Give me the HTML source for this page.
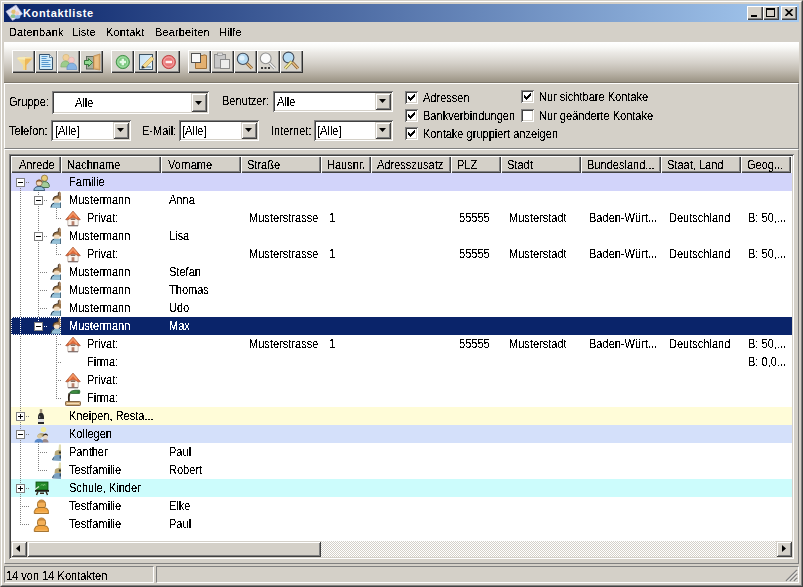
<!DOCTYPE html>
<html><head><meta charset="utf-8"><title>Kontaktliste</title>
<style>
*{box-sizing:border-box}
html,body{margin:0;padding:0}
body{width:803px;height:587px;overflow:hidden;background:#d4d0c8;position:relative;font-family:"Liberation Sans", sans-serif;font-size:11px;color:#000}
.a{position:absolute}
.t{position:absolute;white-space:nowrap;line-height:13px;font-size:12px;transform:translateY(1px) scaleX(0.92);transform-origin:0 0}
.r{position:absolute;background:#d4d0c8;box-shadow:inset 1px 1px #d4d0c8,inset -1px -1px #404040,inset 2px 2px #fff,inset -2px -2px #808080}
.hd{position:absolute;background:#d4d0c8;box-shadow:inset 1px 1px #fff,inset -1px -1px #404040,inset -2px -2px #808080}
.sk{position:absolute;background:#fff;box-shadow:inset 1px 1px #808080,inset -1px -1px #fff,inset 2px 2px #404040,inset -2px -2px #d4d0c8}
.tb{position:absolute;width:23px;height:23px;background:#d8d5ce;box-shadow:inset 1px 1px #fff,inset -1px -1px #303030,inset -2px -2px #8a8a8a}
.tb svg{position:absolute;left:0;top:0}
.cb{position:absolute;width:13px;height:13px;background:#fff;box-shadow:inset 1px 1px #808080,inset -1px -1px #fff,inset 2px 2px #404040,inset -2px -2px #d4d0c8}
.cb svg{position:absolute;left:3px;top:3px}
</style></head><body>
<svg width="0" height="0" style="position:absolute"><filter id="th" x="0" y="0" width="100%" height="100%" color-interpolation-filters="sRGB"><feComponentTransfer><feFuncA type="discrete" tableValues="0 0 0 0 1 1 1 1 1"/></feComponentTransfer></filter></svg>
<div class="a" style="left:0;top:0;width:803px;height:587px;border-top:1px solid #d4d0c8;border-left:1px solid #d4d0c8;border-right:1px solid #404040;border-bottom:1px solid #404040"></div><div class="a" style="left:1px;top:1px;width:801px;height:585px;border-top:1px solid #fff;border-left:1px solid #fff;border-right:1px solid #808080;border-bottom:1px solid #808080"></div><div class="a" style="left:4px;top:4px;width:795px;height:18px;background:linear-gradient(to right,#0a246a,#a6caf0)"></div><svg class="a" style="left:5px;top:4px" width="18" height="18" viewBox="0 0 18 18">
<path d="M1 7.5 L11 1 L17.5 10 L7.5 16.5 Z" fill="#e6e6f6" stroke="#a8acd0" stroke-width="0.8"/>
<path d="M2.5 7.6 L8.5 8.5 L11 2.5" fill="none" stroke="#c4c6e4" stroke-width="0.8"/>
<circle cx="8.5" cy="7.8" r="2.2" fill="#e2c070"/>
<circle cx="12.2" cy="9.2" r="2" fill="#f2cbc0"/>
<ellipse cx="8.2" cy="12.2" rx="2.6" ry="1.9" fill="#8cc48c"/>
<ellipse cx="12.6" cy="12.8" rx="2.8" ry="1.9" fill="#8cb8ec"/>
</svg><div class="a" style="left:23px;top:7px;color:#fff;font-weight:bold;letter-spacing:0.65px;font-size:11px;line-height:13px;white-space:nowrap">Kontaktliste</div><div class="r" style="left:747px;top:6px;width:16px;height:14px;box-shadow:inset 1px 1px #fff,inset -1px -1px #404040,inset -2px -2px #808080"></div><div class="r" style="left:763px;top:6px;width:16px;height:14px;box-shadow:inset 1px 1px #fff,inset -1px -1px #404040,inset -2px -2px #808080"></div><div class="r" style="left:781px;top:6px;width:16px;height:14px;box-shadow:inset 1px 1px #fff,inset -1px -1px #404040,inset -2px -2px #808080"></div><div class="a" style="left:751px;top:15px;width:6px;height:2px;background:#000"></div><div class="a" style="left:766px;top:8px;width:9px;height:9px;border:1px solid #000;border-top-width:2px"></div><svg class="a" style="left:785px;top:9px" width="8" height="7" viewBox="0 0 8 7"><path d="M0.5 0 L7.5 7 M7.5 0 L0.5 7" stroke="#000" stroke-width="1.6"/></svg><div class="a" style="left:4px;top:42px;width:795px;height:41px;background:linear-gradient(to bottom,#ffffff 0%,#fafaf8 10%,#ebe9e5 25%,#d6d2cb 50%,#c2bcb2 70%,#a8a193 90%,#9a9386 100%);border-top:1px solid #fff;border-bottom:1px solid #7c766a"></div><div class="tb" style="left:12px;top:50px"><svg width="23" height="23" viewBox="0 0 23 23"><defs><linearGradient id="gf" x1="0" x2="1"><stop offset="0" stop-color="#fbe8a0"/><stop offset="0.5" stop-color="#f8d880"/><stop offset="0.55" stop-color="#f0b040"/><stop offset="1" stop-color="#f6c460"/></linearGradient></defs><g opacity="0.85"><path d="M5 8.5 Q5 6.8 12.5 6.8 Q20.5 6.8 20.5 8.5 L14.5 15 L14.5 20 L11 20 L11 15 Z" fill="url(#gf)"/><ellipse cx="12.7" cy="8.3" rx="7" ry="1.4" fill="#fcefb8"/><path d="M13 8.5 L19.5 8.5 L14.2 14.5 Z" fill="#f0b448"/></g></svg></div><div class="tb" style="left:35px;top:50px"><svg width="23" height="23" viewBox="0 0 23 23"><path d="M4.5 4.5 L14.5 4.5 L17.5 7.5 L17.5 19.5 L4.5 19.5 Z" fill="#d2ecfa" stroke="#34506a" stroke-width="1"/><path d="M14.5 4.5 L14.5 7.5 L17.5 7.5" fill="#eef8ff" stroke="#34506a" stroke-width="0.7"/><path d="M6.5 6.5h6M6.5 8.5h5M6.5 10.5h9M6.5 12.5h7M6.5 14.5h9M6.5 16.5h9" stroke="#4a8ec8" stroke-width="0.9"/></svg></div><div class="tb" style="left:57px;top:50px"><svg width="23" height="23" viewBox="0 0 23 23"><circle cx="9" cy="7.5" r="3.2" fill="#f2cf98" stroke="#c8b070" stroke-width="0.5"/><path d="M3.8 17 Q3.8 11 8.5 11 Q12.5 11 12.5 15 L12 17 Z" fill="#9ccc8c" stroke="#78a868" stroke-width="0.6"/><circle cx="14.5" cy="10" r="2.9" fill="#f6c8c4" stroke="#d8a8a8" stroke-width="0.5"/><path d="M9.8 19.5 Q9.8 13.2 14.8 13.2 Q19.8 13.2 19.8 19.5 Z" fill="#88b4e4" stroke="#5a88c0" stroke-width="0.6"/></svg></div><div class="tb" style="left:80px;top:50px"><svg width="23" height="23" viewBox="0 0 23 23"><rect x="6.5" y="6.5" width="7" height="12.5" fill="#a8b0a0" stroke="#5a6258" stroke-width="0.9"/><path d="M4.5 10.5 L8.5 10.5 L8.5 8.5 L12.5 12.5 L8.5 16.5 L8.5 14.5 L4.5 14.5 Z" fill="#90d890" stroke="#2a7030" stroke-width="0.9"/><path d="M13.5 6 L20 4 L20 20 L13.5 19 Z" fill="#e0b070" stroke="#b08048" stroke-width="0.7"/><path d="M15 7 L18.5 6 L18.5 18 L15 17.5Z" fill="#f0c890" opacity="0.7"/></svg></div><div class="tb" style="left:111px;top:50px"><svg width="23" height="23" viewBox="0 0 23 23"><circle cx="11.8" cy="12" r="6.6" fill="#7cc880" stroke="#3a8a40" stroke-width="0.9"/><circle cx="11.8" cy="12" r="5" fill="none" stroke="#b4e4b4" stroke-width="0.8"/><path d="M11.8 8.8v6.4M8.6 12h6.4" stroke="#e6fae6" stroke-width="2.4"/></svg></div><div class="tb" style="left:134px;top:50px"><svg width="23" height="23" viewBox="0 0 23 23"><defs><linearGradient id="ge" x1="0" y1="0" x2="1" y2="1"><stop offset="0" stop-color="#c4e0f4"/><stop offset="1" stop-color="#eaf6fc"/></linearGradient></defs><rect x="5.5" y="4.5" width="13" height="15" fill="url(#ge)" stroke="#3a5060" stroke-width="1"/><path d="M7 17h10" stroke="#6890a8" stroke-width="1.2"/><path d="M8.5 15.5 L17.5 6.5 L20 9 L11 18 Z" fill="#f4dc90" stroke="#c0a060" stroke-width="0.7"/><path d="M8.5 15.5 L11 18 L7.5 18.8 Z" fill="#303030"/></svg></div><div class="tb" style="left:157px;top:50px"><svg width="23" height="23" viewBox="0 0 23 23"><circle cx="11.8" cy="12" r="6.6" fill="#e87878" stroke="#b83838" stroke-width="0.9"/><circle cx="11.8" cy="12" r="5" fill="none" stroke="#f8b0b0" stroke-width="0.8"/><path d="M8.6 12h6.4" stroke="#fff0f0" stroke-width="2.4"/></svg></div><div class="tb" style="left:188px;top:50px"><svg width="23" height="23" viewBox="0 0 23 23"><path d="M7.5 5.5 L15 5.5 L16 4.8 L18.5 5.5 L18.5 18.5 L7.5 18.5 Z" fill="#e4b070" stroke="#a07038" stroke-width="1"/><rect x="3.5" y="3.5" width="9" height="9" fill="#f8f8f8" stroke="#505050" stroke-width="1"/></svg></div><div class="tb" style="left:211px;top:50px"><svg width="23" height="23" viewBox="0 0 23 23"><rect x="3.5" y="4.5" width="11" height="13.5" fill="#c8c8c8" stroke="#8a8a8a" stroke-width="1"/><rect x="6.5" y="3" width="5" height="2.5" fill="#e0e0e0" stroke="#909090" stroke-width="0.7"/><rect x="9.5" y="9.5" width="9" height="9" fill="#ececec" stroke="#8a8a8a" stroke-width="1"/></svg></div><div class="tb" style="left:234px;top:50px"><svg width="23" height="23" viewBox="0 0 23 23"><path d="M13 13.5 L18 18.5" stroke="#8a6030" stroke-width="3"/><path d="M13 13.5 L18 18.5" stroke="#e8c088" stroke-width="1.3"/><circle cx="8.9" cy="8.9" r="5.6" fill="#b8dcf4" stroke="#404a58" stroke-width="1.1"/><circle cx="8" cy="8" r="2.6" fill="#e2f2fc"/></svg></div><div class="tb" style="left:257px;top:50px"><svg width="23" height="23" viewBox="0 0 23 23"><path d="M12.5 13 L17.8 18.5" stroke="#909090" stroke-width="3"/><path d="M12.5 13 L17.8 18.5" stroke="#f8f8f8" stroke-width="1.3"/><circle cx="8.7" cy="8.4" r="5.4" fill="#fafafa" stroke="#909090" stroke-width="1.1"/><path d="M4 18h2M7.5 18h2M11 18h2" stroke="#383838" stroke-width="2"/></svg></div><div class="tb" style="left:280px;top:50px"><svg width="23" height="23" viewBox="0 0 23 23"><path d="M12 12 L18 18.5" stroke="#8a6030" stroke-width="3"/><path d="M12 12 L18 18.5" stroke="#e8c088" stroke-width="1.3"/><circle cx="8.5" cy="7.5" r="5.4" fill="#b8dcf4" stroke="#404a58" stroke-width="1.1"/><path d="M5 18.5 L11.5 11.5" stroke="#908040" stroke-width="3"/><path d="M5 18.5 L11.5 11.5" stroke="#f8f0a0" stroke-width="1.6"/></svg></div><div class="a" style="left:4px;top:83px;width:795px;height:66px;border-top:1px solid #fff;border-left:1px solid #fff;border-right:1px solid #808080;border-bottom:1px solid #808080"></div><div class="sk" style="left:52px;top:91px;width:157px;height:23px"></div><div class="hd" style="left:191px;top:93px;width:16px;height:19px;box-shadow:inset 1px 1px #d4d0c8,inset -1px -1px #404040,inset 2px 2px #fff,inset -2px -2px #808080"></div><svg class="a" style="left:195px;top:101px" width="7" height="4" viewBox="0 0 7 4"><path d="M0 0H7L3.5 4Z" fill="#000"/></svg><div class="sk" style="left:273px;top:91px;width:120px;height:21px"></div><div class="hd" style="left:375px;top:93px;width:16px;height:17px;box-shadow:inset 1px 1px #d4d0c8,inset -1px -1px #404040,inset 2px 2px #fff,inset -2px -2px #808080"></div><svg class="a" style="left:379px;top:99px" width="7" height="4" viewBox="0 0 7 4"><path d="M0 0H7L3.5 4Z" fill="#000"/></svg><div class="sk" style="left:51px;top:120px;width:80px;height:21px"></div><div class="hd" style="left:113px;top:122px;width:16px;height:17px;box-shadow:inset 1px 1px #d4d0c8,inset -1px -1px #404040,inset 2px 2px #fff,inset -2px -2px #808080"></div><svg class="a" style="left:117px;top:128px" width="7" height="4" viewBox="0 0 7 4"><path d="M0 0H7L3.5 4Z" fill="#000"/></svg><div class="sk" style="left:179px;top:120px;width:80px;height:21px"></div><div class="hd" style="left:241px;top:122px;width:16px;height:17px;box-shadow:inset 1px 1px #d4d0c8,inset -1px -1px #404040,inset 2px 2px #fff,inset -2px -2px #808080"></div><svg class="a" style="left:245px;top:128px" width="7" height="4" viewBox="0 0 7 4"><path d="M0 0H7L3.5 4Z" fill="#000"/></svg><div class="sk" style="left:314px;top:120px;width:79px;height:21px"></div><div class="hd" style="left:375px;top:122px;width:16px;height:17px;box-shadow:inset 1px 1px #d4d0c8,inset -1px -1px #404040,inset 2px 2px #fff,inset -2px -2px #808080"></div><svg class="a" style="left:379px;top:128px" width="7" height="4" viewBox="0 0 7 4"><path d="M0 0H7L3.5 4Z" fill="#000"/></svg><div class="cb" style="left:405px;top:91px"><svg width="7" height="7" viewBox="0 0 7 7" shape-rendering="crispEdges"><path d="M6 0h1v3h-1zM5 1h1v3h-1zM4 2h1v3h-1zM3 3h1v3h-1zM2 4h1v3h-1zM1 3h1v3h-1zM0 2h1v3h-1z" fill="#000"/></svg></div><div class="cb" style="left:405px;top:109px"><svg width="7" height="7" viewBox="0 0 7 7" shape-rendering="crispEdges"><path d="M6 0h1v3h-1zM5 1h1v3h-1zM4 2h1v3h-1zM3 3h1v3h-1zM2 4h1v3h-1zM1 3h1v3h-1zM0 2h1v3h-1z" fill="#000"/></svg></div><div class="cb" style="left:405px;top:127px"><svg width="7" height="7" viewBox="0 0 7 7" shape-rendering="crispEdges"><path d="M6 0h1v3h-1zM5 1h1v3h-1zM4 2h1v3h-1zM3 3h1v3h-1zM2 4h1v3h-1zM1 3h1v3h-1zM0 2h1v3h-1z" fill="#000"/></svg></div><div class="cb" style="left:521px;top:90px"><svg width="7" height="7" viewBox="0 0 7 7" shape-rendering="crispEdges"><path d="M6 0h1v3h-1zM5 1h1v3h-1zM4 2h1v3h-1zM3 3h1v3h-1zM2 4h1v3h-1zM1 3h1v3h-1zM0 2h1v3h-1z" fill="#000"/></svg></div><div class="cb" style="left:521px;top:109px"></div><div class="a" style="left:4px;top:149px;width:795px;height:415px;border-top:1px solid #fff;border-left:1px solid #fff;border-right:1px solid #808080;border-bottom:1px solid #808080"></div><div class="sk" style="left:9px;top:154px;width:785px;height:405px"></div><div class="hd" style="left:11px;top:156px;width:50px;height:17px"></div><div class="hd" style="left:61px;top:156px;width:100px;height:17px"></div><div class="hd" style="left:161px;top:156px;width:80px;height:17px"></div><div class="hd" style="left:241px;top:156px;width:80px;height:17px"></div><div class="hd" style="left:321px;top:156px;width:50px;height:17px"></div><div class="hd" style="left:371px;top:156px;width:80px;height:17px"></div><div class="hd" style="left:451px;top:156px;width:50px;height:17px"></div><div class="hd" style="left:501px;top:156px;width:80px;height:17px"></div><div class="hd" style="left:581px;top:156px;width:80px;height:17px"></div><div class="hd" style="left:661px;top:156px;width:80px;height:17px"></div><div class="hd" style="left:741px;top:156px;width:50px;height:17px"></div><div class="a" style="left:11px;top:173px;width:781px;height:18px;background:#d2d4fa"></div><div class="a" style="left:11px;top:317px;width:781px;height:18px;background:#0a246a"></div><div class="a" style="left:11px;top:407px;width:781px;height:18px;background:#fffcd8"></div><div class="a" style="left:11px;top:425px;width:781px;height:18px;background:#d4e0fa"></div><div class="a" style="left:11px;top:479px;width:781px;height:18px;background:#ccfcfc"></div><svg class="a" style="left:0;top:0" width="803" height="587" viewBox="0 0 803 587"><rect x="20" y="182" width="1" height="1" fill="#808080"/><rect x="20" y="184" width="1" height="1" fill="#808080"/><rect x="20" y="186" width="1" height="1" fill="#808080"/><rect x="20" y="188" width="1" height="1" fill="#808080"/><rect x="20" y="190" width="1" height="1" fill="#808080"/><rect x="20" y="192" width="1" height="1" fill="#808080"/><rect x="20" y="194" width="1" height="1" fill="#808080"/><rect x="20" y="196" width="1" height="1" fill="#808080"/><rect x="20" y="198" width="1" height="1" fill="#808080"/><rect x="20" y="200" width="1" height="1" fill="#808080"/><rect x="20" y="202" width="1" height="1" fill="#808080"/><rect x="20" y="204" width="1" height="1" fill="#808080"/><rect x="20" y="206" width="1" height="1" fill="#808080"/><rect x="20" y="208" width="1" height="1" fill="#808080"/><rect x="20" y="210" width="1" height="1" fill="#808080"/><rect x="20" y="212" width="1" height="1" fill="#808080"/><rect x="20" y="214" width="1" height="1" fill="#808080"/><rect x="20" y="216" width="1" height="1" fill="#808080"/><rect x="20" y="218" width="1" height="1" fill="#808080"/><rect x="20" y="220" width="1" height="1" fill="#808080"/><rect x="20" y="222" width="1" height="1" fill="#808080"/><rect x="20" y="224" width="1" height="1" fill="#808080"/><rect x="20" y="226" width="1" height="1" fill="#808080"/><rect x="20" y="228" width="1" height="1" fill="#808080"/><rect x="20" y="230" width="1" height="1" fill="#808080"/><rect x="20" y="232" width="1" height="1" fill="#808080"/><rect x="20" y="234" width="1" height="1" fill="#808080"/><rect x="20" y="236" width="1" height="1" fill="#808080"/><rect x="20" y="238" width="1" height="1" fill="#808080"/><rect x="20" y="240" width="1" height="1" fill="#808080"/><rect x="20" y="242" width="1" height="1" fill="#808080"/><rect x="20" y="244" width="1" height="1" fill="#808080"/><rect x="20" y="246" width="1" height="1" fill="#808080"/><rect x="20" y="248" width="1" height="1" fill="#808080"/><rect x="20" y="250" width="1" height="1" fill="#808080"/><rect x="20" y="252" width="1" height="1" fill="#808080"/><rect x="20" y="254" width="1" height="1" fill="#808080"/><rect x="20" y="256" width="1" height="1" fill="#808080"/><rect x="20" y="258" width="1" height="1" fill="#808080"/><rect x="20" y="260" width="1" height="1" fill="#808080"/><rect x="20" y="262" width="1" height="1" fill="#808080"/><rect x="20" y="264" width="1" height="1" fill="#808080"/><rect x="20" y="266" width="1" height="1" fill="#808080"/><rect x="20" y="268" width="1" height="1" fill="#808080"/><rect x="20" y="270" width="1" height="1" fill="#808080"/><rect x="20" y="272" width="1" height="1" fill="#808080"/><rect x="20" y="274" width="1" height="1" fill="#808080"/><rect x="20" y="276" width="1" height="1" fill="#808080"/><rect x="20" y="278" width="1" height="1" fill="#808080"/><rect x="20" y="280" width="1" height="1" fill="#808080"/><rect x="20" y="282" width="1" height="1" fill="#808080"/><rect x="20" y="284" width="1" height="1" fill="#808080"/><rect x="20" y="286" width="1" height="1" fill="#808080"/><rect x="20" y="288" width="1" height="1" fill="#808080"/><rect x="20" y="290" width="1" height="1" fill="#808080"/><rect x="20" y="292" width="1" height="1" fill="#808080"/><rect x="20" y="294" width="1" height="1" fill="#808080"/><rect x="20" y="296" width="1" height="1" fill="#808080"/><rect x="20" y="298" width="1" height="1" fill="#808080"/><rect x="20" y="300" width="1" height="1" fill="#808080"/><rect x="20" y="302" width="1" height="1" fill="#808080"/><rect x="20" y="304" width="1" height="1" fill="#808080"/><rect x="20" y="306" width="1" height="1" fill="#808080"/><rect x="20" y="308" width="1" height="1" fill="#808080"/><rect x="20" y="310" width="1" height="1" fill="#808080"/><rect x="20" y="312" width="1" height="1" fill="#808080"/><rect x="20" y="314" width="1" height="1" fill="#808080"/><rect x="20" y="316" width="1" height="1" fill="#808080"/><rect x="20" y="318" width="1" height="1" fill="#ffffff"/><rect x="20" y="320" width="1" height="1" fill="#ffffff"/><rect x="20" y="322" width="1" height="1" fill="#ffffff"/><rect x="20" y="324" width="1" height="1" fill="#ffffff"/><rect x="20" y="326" width="1" height="1" fill="#ffffff"/><rect x="20" y="328" width="1" height="1" fill="#ffffff"/><rect x="20" y="330" width="1" height="1" fill="#ffffff"/><rect x="20" y="332" width="1" height="1" fill="#ffffff"/><rect x="20" y="334" width="1" height="1" fill="#ffffff"/><rect x="20" y="336" width="1" height="1" fill="#808080"/><rect x="20" y="338" width="1" height="1" fill="#808080"/><rect x="20" y="340" width="1" height="1" fill="#808080"/><rect x="20" y="342" width="1" height="1" fill="#808080"/><rect x="20" y="344" width="1" height="1" fill="#808080"/><rect x="20" y="346" width="1" height="1" fill="#808080"/><rect x="20" y="348" width="1" height="1" fill="#808080"/><rect x="20" y="350" width="1" height="1" fill="#808080"/><rect x="20" y="352" width="1" height="1" fill="#808080"/><rect x="20" y="354" width="1" height="1" fill="#808080"/><rect x="20" y="356" width="1" height="1" fill="#808080"/><rect x="20" y="358" width="1" height="1" fill="#808080"/><rect x="20" y="360" width="1" height="1" fill="#808080"/><rect x="20" y="362" width="1" height="1" fill="#808080"/><rect x="20" y="364" width="1" height="1" fill="#808080"/><rect x="20" y="366" width="1" height="1" fill="#808080"/><rect x="20" y="368" width="1" height="1" fill="#808080"/><rect x="20" y="370" width="1" height="1" fill="#808080"/><rect x="20" y="372" width="1" height="1" fill="#808080"/><rect x="20" y="374" width="1" height="1" fill="#808080"/><rect x="20" y="376" width="1" height="1" fill="#808080"/><rect x="20" y="378" width="1" height="1" fill="#808080"/><rect x="20" y="380" width="1" height="1" fill="#808080"/><rect x="20" y="382" width="1" height="1" fill="#808080"/><rect x="20" y="384" width="1" height="1" fill="#808080"/><rect x="20" y="386" width="1" height="1" fill="#808080"/><rect x="20" y="388" width="1" height="1" fill="#808080"/><rect x="20" y="390" width="1" height="1" fill="#808080"/><rect x="20" y="392" width="1" height="1" fill="#808080"/><rect x="20" y="394" width="1" height="1" fill="#808080"/><rect x="20" y="396" width="1" height="1" fill="#808080"/><rect x="20" y="398" width="1" height="1" fill="#808080"/><rect x="20" y="400" width="1" height="1" fill="#808080"/><rect x="20" y="402" width="1" height="1" fill="#808080"/><rect x="20" y="404" width="1" height="1" fill="#808080"/><rect x="20" y="406" width="1" height="1" fill="#808080"/><rect x="20" y="408" width="1" height="1" fill="#808080"/><rect x="20" y="410" width="1" height="1" fill="#808080"/><rect x="20" y="412" width="1" height="1" fill="#808080"/><rect x="20" y="414" width="1" height="1" fill="#808080"/><rect x="20" y="416" width="1" height="1" fill="#808080"/><rect x="20" y="418" width="1" height="1" fill="#808080"/><rect x="20" y="420" width="1" height="1" fill="#808080"/><rect x="20" y="422" width="1" height="1" fill="#808080"/><rect x="20" y="424" width="1" height="1" fill="#808080"/><rect x="20" y="426" width="1" height="1" fill="#808080"/><rect x="20" y="428" width="1" height="1" fill="#808080"/><rect x="20" y="430" width="1" height="1" fill="#808080"/><rect x="20" y="432" width="1" height="1" fill="#808080"/><rect x="20" y="434" width="1" height="1" fill="#808080"/><rect x="20" y="436" width="1" height="1" fill="#808080"/><rect x="20" y="438" width="1" height="1" fill="#808080"/><rect x="20" y="440" width="1" height="1" fill="#808080"/><rect x="20" y="442" width="1" height="1" fill="#808080"/><rect x="20" y="444" width="1" height="1" fill="#808080"/><rect x="20" y="446" width="1" height="1" fill="#808080"/><rect x="20" y="448" width="1" height="1" fill="#808080"/><rect x="20" y="450" width="1" height="1" fill="#808080"/><rect x="20" y="452" width="1" height="1" fill="#808080"/><rect x="20" y="454" width="1" height="1" fill="#808080"/><rect x="20" y="456" width="1" height="1" fill="#808080"/><rect x="20" y="458" width="1" height="1" fill="#808080"/><rect x="20" y="460" width="1" height="1" fill="#808080"/><rect x="20" y="462" width="1" height="1" fill="#808080"/><rect x="20" y="464" width="1" height="1" fill="#808080"/><rect x="20" y="466" width="1" height="1" fill="#808080"/><rect x="20" y="468" width="1" height="1" fill="#808080"/><rect x="20" y="470" width="1" height="1" fill="#808080"/><rect x="20" y="472" width="1" height="1" fill="#808080"/><rect x="20" y="474" width="1" height="1" fill="#808080"/><rect x="20" y="476" width="1" height="1" fill="#808080"/><rect x="20" y="478" width="1" height="1" fill="#808080"/><rect x="20" y="480" width="1" height="1" fill="#808080"/><rect x="20" y="482" width="1" height="1" fill="#808080"/><rect x="20" y="484" width="1" height="1" fill="#808080"/><rect x="20" y="486" width="1" height="1" fill="#808080"/><rect x="20" y="488" width="1" height="1" fill="#808080"/><rect x="20" y="490" width="1" height="1" fill="#808080"/><rect x="20" y="492" width="1" height="1" fill="#808080"/><rect x="20" y="494" width="1" height="1" fill="#808080"/><rect x="20" y="496" width="1" height="1" fill="#808080"/><rect x="20" y="498" width="1" height="1" fill="#808080"/><rect x="20" y="500" width="1" height="1" fill="#808080"/><rect x="20" y="502" width="1" height="1" fill="#808080"/><rect x="20" y="504" width="1" height="1" fill="#808080"/><rect x="20" y="506" width="1" height="1" fill="#808080"/><rect x="20" y="508" width="1" height="1" fill="#808080"/><rect x="20" y="510" width="1" height="1" fill="#808080"/><rect x="20" y="512" width="1" height="1" fill="#808080"/><rect x="20" y="514" width="1" height="1" fill="#808080"/><rect x="20" y="516" width="1" height="1" fill="#808080"/><rect x="20" y="518" width="1" height="1" fill="#808080"/><rect x="20" y="520" width="1" height="1" fill="#808080"/><rect x="20" y="522" width="1" height="1" fill="#808080"/><rect x="20" y="524" width="1" height="1" fill="#808080"/><rect x="38" y="190" width="1" height="1" fill="#808080"/><rect x="38" y="192" width="1" height="1" fill="#808080"/><rect x="38" y="194" width="1" height="1" fill="#808080"/><rect x="38" y="196" width="1" height="1" fill="#808080"/><rect x="38" y="198" width="1" height="1" fill="#808080"/><rect x="38" y="200" width="1" height="1" fill="#808080"/><rect x="38" y="202" width="1" height="1" fill="#808080"/><rect x="38" y="204" width="1" height="1" fill="#808080"/><rect x="38" y="206" width="1" height="1" fill="#808080"/><rect x="38" y="208" width="1" height="1" fill="#808080"/><rect x="38" y="210" width="1" height="1" fill="#808080"/><rect x="38" y="212" width="1" height="1" fill="#808080"/><rect x="38" y="214" width="1" height="1" fill="#808080"/><rect x="38" y="216" width="1" height="1" fill="#808080"/><rect x="38" y="218" width="1" height="1" fill="#808080"/><rect x="38" y="220" width="1" height="1" fill="#808080"/><rect x="38" y="222" width="1" height="1" fill="#808080"/><rect x="38" y="224" width="1" height="1" fill="#808080"/><rect x="38" y="226" width="1" height="1" fill="#808080"/><rect x="38" y="228" width="1" height="1" fill="#808080"/><rect x="38" y="230" width="1" height="1" fill="#808080"/><rect x="38" y="232" width="1" height="1" fill="#808080"/><rect x="38" y="234" width="1" height="1" fill="#808080"/><rect x="38" y="236" width="1" height="1" fill="#808080"/><rect x="38" y="238" width="1" height="1" fill="#808080"/><rect x="38" y="240" width="1" height="1" fill="#808080"/><rect x="38" y="242" width="1" height="1" fill="#808080"/><rect x="38" y="244" width="1" height="1" fill="#808080"/><rect x="38" y="246" width="1" height="1" fill="#808080"/><rect x="38" y="248" width="1" height="1" fill="#808080"/><rect x="38" y="250" width="1" height="1" fill="#808080"/><rect x="38" y="252" width="1" height="1" fill="#808080"/><rect x="38" y="254" width="1" height="1" fill="#808080"/><rect x="38" y="256" width="1" height="1" fill="#808080"/><rect x="38" y="258" width="1" height="1" fill="#808080"/><rect x="38" y="260" width="1" height="1" fill="#808080"/><rect x="38" y="262" width="1" height="1" fill="#808080"/><rect x="38" y="264" width="1" height="1" fill="#808080"/><rect x="38" y="266" width="1" height="1" fill="#808080"/><rect x="38" y="268" width="1" height="1" fill="#808080"/><rect x="38" y="270" width="1" height="1" fill="#808080"/><rect x="38" y="272" width="1" height="1" fill="#808080"/><rect x="38" y="274" width="1" height="1" fill="#808080"/><rect x="38" y="276" width="1" height="1" fill="#808080"/><rect x="38" y="278" width="1" height="1" fill="#808080"/><rect x="38" y="280" width="1" height="1" fill="#808080"/><rect x="38" y="282" width="1" height="1" fill="#808080"/><rect x="38" y="284" width="1" height="1" fill="#808080"/><rect x="38" y="286" width="1" height="1" fill="#808080"/><rect x="38" y="288" width="1" height="1" fill="#808080"/><rect x="38" y="290" width="1" height="1" fill="#808080"/><rect x="38" y="292" width="1" height="1" fill="#808080"/><rect x="38" y="294" width="1" height="1" fill="#808080"/><rect x="38" y="296" width="1" height="1" fill="#808080"/><rect x="38" y="298" width="1" height="1" fill="#808080"/><rect x="38" y="300" width="1" height="1" fill="#808080"/><rect x="38" y="302" width="1" height="1" fill="#808080"/><rect x="38" y="304" width="1" height="1" fill="#808080"/><rect x="38" y="306" width="1" height="1" fill="#808080"/><rect x="38" y="308" width="1" height="1" fill="#808080"/><rect x="38" y="310" width="1" height="1" fill="#808080"/><rect x="38" y="312" width="1" height="1" fill="#808080"/><rect x="38" y="314" width="1" height="1" fill="#808080"/><rect x="38" y="316" width="1" height="1" fill="#808080"/><rect x="38" y="318" width="1" height="1" fill="#ffffff"/><rect x="38" y="320" width="1" height="1" fill="#ffffff"/><rect x="38" y="322" width="1" height="1" fill="#ffffff"/><rect x="38" y="324" width="1" height="1" fill="#ffffff"/><rect x="38" y="326" width="1" height="1" fill="#ffffff"/><rect x="38" y="442" width="1" height="1" fill="#808080"/><rect x="38" y="444" width="1" height="1" fill="#808080"/><rect x="38" y="446" width="1" height="1" fill="#808080"/><rect x="38" y="448" width="1" height="1" fill="#808080"/><rect x="38" y="450" width="1" height="1" fill="#808080"/><rect x="38" y="452" width="1" height="1" fill="#808080"/><rect x="38" y="454" width="1" height="1" fill="#808080"/><rect x="38" y="456" width="1" height="1" fill="#808080"/><rect x="38" y="458" width="1" height="1" fill="#808080"/><rect x="38" y="460" width="1" height="1" fill="#808080"/><rect x="38" y="462" width="1" height="1" fill="#808080"/><rect x="38" y="464" width="1" height="1" fill="#808080"/><rect x="38" y="466" width="1" height="1" fill="#808080"/><rect x="38" y="468" width="1" height="1" fill="#808080"/><rect x="38" y="470" width="1" height="1" fill="#808080"/><rect x="56" y="208" width="1" height="1" fill="#808080"/><rect x="56" y="210" width="1" height="1" fill="#808080"/><rect x="56" y="212" width="1" height="1" fill="#808080"/><rect x="56" y="214" width="1" height="1" fill="#808080"/><rect x="56" y="216" width="1" height="1" fill="#808080"/><rect x="56" y="218" width="1" height="1" fill="#808080"/><rect x="56" y="244" width="1" height="1" fill="#808080"/><rect x="56" y="246" width="1" height="1" fill="#808080"/><rect x="56" y="248" width="1" height="1" fill="#808080"/><rect x="56" y="250" width="1" height="1" fill="#808080"/><rect x="56" y="252" width="1" height="1" fill="#808080"/><rect x="56" y="254" width="1" height="1" fill="#808080"/><rect x="56" y="334" width="1" height="1" fill="#ffffff"/><rect x="56" y="336" width="1" height="1" fill="#808080"/><rect x="56" y="338" width="1" height="1" fill="#808080"/><rect x="56" y="340" width="1" height="1" fill="#808080"/><rect x="56" y="342" width="1" height="1" fill="#808080"/><rect x="56" y="344" width="1" height="1" fill="#808080"/><rect x="56" y="346" width="1" height="1" fill="#808080"/><rect x="56" y="348" width="1" height="1" fill="#808080"/><rect x="56" y="350" width="1" height="1" fill="#808080"/><rect x="56" y="352" width="1" height="1" fill="#808080"/><rect x="56" y="354" width="1" height="1" fill="#808080"/><rect x="56" y="356" width="1" height="1" fill="#808080"/><rect x="56" y="358" width="1" height="1" fill="#808080"/><rect x="56" y="360" width="1" height="1" fill="#808080"/><rect x="56" y="362" width="1" height="1" fill="#808080"/><rect x="56" y="364" width="1" height="1" fill="#808080"/><rect x="56" y="366" width="1" height="1" fill="#808080"/><rect x="56" y="368" width="1" height="1" fill="#808080"/><rect x="56" y="370" width="1" height="1" fill="#808080"/><rect x="56" y="372" width="1" height="1" fill="#808080"/><rect x="56" y="374" width="1" height="1" fill="#808080"/><rect x="56" y="376" width="1" height="1" fill="#808080"/><rect x="56" y="378" width="1" height="1" fill="#808080"/><rect x="56" y="380" width="1" height="1" fill="#808080"/><rect x="56" y="382" width="1" height="1" fill="#808080"/><rect x="56" y="384" width="1" height="1" fill="#808080"/><rect x="56" y="386" width="1" height="1" fill="#808080"/><rect x="56" y="388" width="1" height="1" fill="#808080"/><rect x="56" y="390" width="1" height="1" fill="#808080"/><rect x="56" y="392" width="1" height="1" fill="#808080"/><rect x="56" y="394" width="1" height="1" fill="#808080"/><rect x="56" y="396" width="1" height="1" fill="#808080"/><rect x="56" y="398" width="1" height="1" fill="#808080"/><rect x="20" y="182" width="1" height="1" fill="#808080"/><rect x="22" y="182" width="1" height="1" fill="#808080"/><rect x="24" y="182" width="1" height="1" fill="#808080"/><rect x="26" y="182" width="1" height="1" fill="#808080"/><rect x="28" y="182" width="1" height="1" fill="#808080"/><rect x="38" y="200" width="1" height="1" fill="#808080"/><rect x="40" y="200" width="1" height="1" fill="#808080"/><rect x="42" y="200" width="1" height="1" fill="#808080"/><rect x="44" y="200" width="1" height="1" fill="#808080"/><rect x="46" y="200" width="1" height="1" fill="#808080"/><rect x="56" y="218" width="1" height="1" fill="#808080"/><rect x="58" y="218" width="1" height="1" fill="#808080"/><rect x="60" y="218" width="1" height="1" fill="#808080"/><rect x="38" y="236" width="1" height="1" fill="#808080"/><rect x="40" y="236" width="1" height="1" fill="#808080"/><rect x="42" y="236" width="1" height="1" fill="#808080"/><rect x="44" y="236" width="1" height="1" fill="#808080"/><rect x="46" y="236" width="1" height="1" fill="#808080"/><rect x="56" y="254" width="1" height="1" fill="#808080"/><rect x="58" y="254" width="1" height="1" fill="#808080"/><rect x="60" y="254" width="1" height="1" fill="#808080"/><rect x="38" y="272" width="1" height="1" fill="#808080"/><rect x="40" y="272" width="1" height="1" fill="#808080"/><rect x="42" y="272" width="1" height="1" fill="#808080"/><rect x="44" y="272" width="1" height="1" fill="#808080"/><rect x="46" y="272" width="1" height="1" fill="#808080"/><rect x="38" y="290" width="1" height="1" fill="#808080"/><rect x="40" y="290" width="1" height="1" fill="#808080"/><rect x="42" y="290" width="1" height="1" fill="#808080"/><rect x="44" y="290" width="1" height="1" fill="#808080"/><rect x="46" y="290" width="1" height="1" fill="#808080"/><rect x="38" y="308" width="1" height="1" fill="#808080"/><rect x="40" y="308" width="1" height="1" fill="#808080"/><rect x="42" y="308" width="1" height="1" fill="#808080"/><rect x="44" y="308" width="1" height="1" fill="#808080"/><rect x="46" y="308" width="1" height="1" fill="#808080"/><rect x="38" y="326" width="1" height="1" fill="#ffffff"/><rect x="40" y="326" width="1" height="1" fill="#ffffff"/><rect x="42" y="326" width="1" height="1" fill="#ffffff"/><rect x="44" y="326" width="1" height="1" fill="#ffffff"/><rect x="46" y="326" width="1" height="1" fill="#ffffff"/><rect x="56" y="344" width="1" height="1" fill="#808080"/><rect x="58" y="344" width="1" height="1" fill="#808080"/><rect x="60" y="344" width="1" height="1" fill="#808080"/><rect x="56" y="362" width="1" height="1" fill="#808080"/><rect x="58" y="362" width="1" height="1" fill="#808080"/><rect x="60" y="362" width="1" height="1" fill="#808080"/><rect x="56" y="380" width="1" height="1" fill="#808080"/><rect x="58" y="380" width="1" height="1" fill="#808080"/><rect x="60" y="380" width="1" height="1" fill="#808080"/><rect x="56" y="398" width="1" height="1" fill="#808080"/><rect x="58" y="398" width="1" height="1" fill="#808080"/><rect x="60" y="398" width="1" height="1" fill="#808080"/><rect x="20" y="416" width="1" height="1" fill="#808080"/><rect x="22" y="416" width="1" height="1" fill="#808080"/><rect x="24" y="416" width="1" height="1" fill="#808080"/><rect x="26" y="416" width="1" height="1" fill="#808080"/><rect x="28" y="416" width="1" height="1" fill="#808080"/><rect x="20" y="434" width="1" height="1" fill="#808080"/><rect x="22" y="434" width="1" height="1" fill="#808080"/><rect x="24" y="434" width="1" height="1" fill="#808080"/><rect x="26" y="434" width="1" height="1" fill="#808080"/><rect x="28" y="434" width="1" height="1" fill="#808080"/><rect x="38" y="452" width="1" height="1" fill="#808080"/><rect x="40" y="452" width="1" height="1" fill="#808080"/><rect x="42" y="452" width="1" height="1" fill="#808080"/><rect x="44" y="452" width="1" height="1" fill="#808080"/><rect x="46" y="452" width="1" height="1" fill="#808080"/><rect x="38" y="470" width="1" height="1" fill="#808080"/><rect x="40" y="470" width="1" height="1" fill="#808080"/><rect x="42" y="470" width="1" height="1" fill="#808080"/><rect x="44" y="470" width="1" height="1" fill="#808080"/><rect x="46" y="470" width="1" height="1" fill="#808080"/><rect x="20" y="488" width="1" height="1" fill="#808080"/><rect x="22" y="488" width="1" height="1" fill="#808080"/><rect x="24" y="488" width="1" height="1" fill="#808080"/><rect x="26" y="488" width="1" height="1" fill="#808080"/><rect x="28" y="488" width="1" height="1" fill="#808080"/><rect x="20" y="506" width="1" height="1" fill="#808080"/><rect x="22" y="506" width="1" height="1" fill="#808080"/><rect x="24" y="506" width="1" height="1" fill="#808080"/><rect x="26" y="506" width="1" height="1" fill="#808080"/><rect x="28" y="506" width="1" height="1" fill="#808080"/><rect x="20" y="524" width="1" height="1" fill="#808080"/><rect x="22" y="524" width="1" height="1" fill="#808080"/><rect x="24" y="524" width="1" height="1" fill="#808080"/><rect x="26" y="524" width="1" height="1" fill="#808080"/><rect x="28" y="524" width="1" height="1" fill="#808080"/></svg><div class="a" style="left:16px;top:178px;width:9px;height:9px;background:#fff;border:1px solid #808080"></div><div class="a" style="left:18px;top:182px;width:5px;height:1px;background:#000"></div><div class="a" style="left:34px;top:196px;width:9px;height:9px;background:#fff;border:1px solid #808080"></div><div class="a" style="left:36px;top:200px;width:5px;height:1px;background:#000"></div><div class="a" style="left:34px;top:232px;width:9px;height:9px;background:#fff;border:1px solid #808080"></div><div class="a" style="left:36px;top:236px;width:5px;height:1px;background:#000"></div><div class="a" style="left:34px;top:322px;width:9px;height:9px;background:#fff;border:1px solid #808080"></div><div class="a" style="left:36px;top:326px;width:5px;height:1px;background:#000"></div><div class="a" style="left:16px;top:412px;width:9px;height:9px;background:#fff;border:1px solid #808080"></div><div class="a" style="left:18px;top:416px;width:5px;height:1px;background:#000"></div><div class="a" style="left:20px;top:414px;width:1px;height:5px;background:#000"></div><div class="a" style="left:16px;top:430px;width:9px;height:9px;background:#fff;border:1px solid #808080"></div><div class="a" style="left:18px;top:434px;width:5px;height:1px;background:#000"></div><div class="a" style="left:16px;top:484px;width:9px;height:9px;background:#fff;border:1px solid #808080"></div><div class="a" style="left:18px;top:488px;width:5px;height:1px;background:#000"></div><div class="a" style="left:20px;top:486px;width:1px;height:5px;background:#000"></div><svg class="a" style="left:33px;top:174px" width="17" height="17" viewBox="0 0 17 17"><circle cx="11.5" cy="4.2" r="3.1" fill="#e8cc78" stroke="#7a6030" stroke-width="0.7"/><path d="M6.5 12.5 Q6.8 7.6 11.5 7.6 Q16.2 7.6 16.4 12.5 L15.5 13.5 L8 13.5 Z" fill="#a4cc98" stroke="#2e5a30" stroke-width="0.8"/><circle cx="6.2" cy="9" r="3" fill="#f2d8b8" stroke="#6a4828" stroke-width="0.6"/><path d="M3 8.6 Q3.4 5.6 6.2 5.6 Q9 5.6 9.4 8.6 Q7.8 7 6.2 7.6 Q4.6 7 3 8.6Z" fill="#8a5a30"/><path d="M0.8 16.6 Q1 12.4 6.2 12.4 Q11.4 12.4 11.6 16.6 Z" fill="#90bcd8" stroke="#1e3a58" stroke-width="0.8"/></svg><svg class="a" style="left:50px;top:191px" width="12" height="18" viewBox="0 0 12 18"><defs><clipPath id="cp1"><rect x="0" y="0" width="11" height="18"/></clipPath></defs><g clip-path="url(#cp1)"><path d="M8 1.8 Q9 0.8 10.2 1.2 L11.5 1.5 L11.5 8 L8.2 8 Z" fill="#b09070"/><path d="M2.8 9.2 Q3 5.2 6.8 5 L11.5 5 L11.5 9.5 L2.8 9.5 Z" fill="#9a7448"/><path d="M2.8 9.2 Q3 5.2 6.6 5 L8.3 4.8 L8.3 1.8 L9.6 1" fill="none" stroke="#3a2818" stroke-width="0.9"/><ellipse cx="6.8" cy="9.8" rx="2.9" ry="2.3" fill="#f2dcc0"/><path d="M0.8 16.8 Q0.8 12.6 4.5 11.8 L11.5 11.8 L11.5 17 Z" fill="#8ab6ce"/><path d="M0.9 16.4 Q1 12.8 4.2 12" fill="none" stroke="#24384a" stroke-width="1"/><path d="M2.5 15h8" stroke="#a8d0e4" stroke-width="0.9"/><rect x="10.2" y="11.5" width="0.8" height="5.5" fill="#3a5a70"/></g></svg><svg class="a" style="left:65px;top:209px" width="16" height="18" viewBox="0 0 16 18"><path d="M0.8 10.6 L8 2.2 L15.2 10.6 L13.2 10.8 L13.2 16.5 L2.8 16.5 L2.8 10.8 Z" fill="#fbf5ef" stroke="#a89890" stroke-width="0.6"/><path d="M0.8 10.6 L8 2.2 L15.2 10.6 L13 10.8 L11 9.5 Q8 8.2 5 9.5 L3 10.8 Z" fill="#e06a3a" stroke="#a04a28" stroke-width="0.6"/><path d="M4 8.6 L8 4 L12 8.6" fill="none" stroke="#f49a68" stroke-width="1.6"/><ellipse cx="8" cy="10.2" rx="2.6" ry="0.9" fill="#8a6a5a"/><rect x="6.6" y="12.2" width="2.8" height="4.3" fill="#b8806c"/><path d="M3 16.8h10" stroke="#605050" stroke-width="0.9"/></svg><svg class="a" style="left:50px;top:227px" width="12" height="18" viewBox="0 0 12 18"><defs><clipPath id="cp1"><rect x="0" y="0" width="11" height="18"/></clipPath></defs><g clip-path="url(#cp1)"><path d="M8 1.8 Q9 0.8 10.2 1.2 L11.5 1.5 L11.5 8 L8.2 8 Z" fill="#b09070"/><path d="M2.8 9.2 Q3 5.2 6.8 5 L11.5 5 L11.5 9.5 L2.8 9.5 Z" fill="#9a7448"/><path d="M2.8 9.2 Q3 5.2 6.6 5 L8.3 4.8 L8.3 1.8 L9.6 1" fill="none" stroke="#3a2818" stroke-width="0.9"/><ellipse cx="6.8" cy="9.8" rx="2.9" ry="2.3" fill="#f2dcc0"/><path d="M0.8 16.8 Q0.8 12.6 4.5 11.8 L11.5 11.8 L11.5 17 Z" fill="#8ab6ce"/><path d="M0.9 16.4 Q1 12.8 4.2 12" fill="none" stroke="#24384a" stroke-width="1"/><path d="M2.5 15h8" stroke="#a8d0e4" stroke-width="0.9"/><rect x="10.2" y="11.5" width="0.8" height="5.5" fill="#3a5a70"/></g></svg><svg class="a" style="left:65px;top:245px" width="16" height="18" viewBox="0 0 16 18"><path d="M0.8 10.6 L8 2.2 L15.2 10.6 L13.2 10.8 L13.2 16.5 L2.8 16.5 L2.8 10.8 Z" fill="#fbf5ef" stroke="#a89890" stroke-width="0.6"/><path d="M0.8 10.6 L8 2.2 L15.2 10.6 L13 10.8 L11 9.5 Q8 8.2 5 9.5 L3 10.8 Z" fill="#e06a3a" stroke="#a04a28" stroke-width="0.6"/><path d="M4 8.6 L8 4 L12 8.6" fill="none" stroke="#f49a68" stroke-width="1.6"/><ellipse cx="8" cy="10.2" rx="2.6" ry="0.9" fill="#8a6a5a"/><rect x="6.6" y="12.2" width="2.8" height="4.3" fill="#b8806c"/><path d="M3 16.8h10" stroke="#605050" stroke-width="0.9"/></svg><svg class="a" style="left:50px;top:263px" width="12" height="18" viewBox="0 0 12 18"><defs><clipPath id="cp1"><rect x="0" y="0" width="11" height="18"/></clipPath></defs><g clip-path="url(#cp1)"><path d="M8 1.8 Q9 0.8 10.2 1.2 L11.5 1.5 L11.5 8 L8.2 8 Z" fill="#b09070"/><path d="M2.8 9.2 Q3 5.2 6.8 5 L11.5 5 L11.5 9.5 L2.8 9.5 Z" fill="#9a7448"/><path d="M2.8 9.2 Q3 5.2 6.6 5 L8.3 4.8 L8.3 1.8 L9.6 1" fill="none" stroke="#3a2818" stroke-width="0.9"/><ellipse cx="6.8" cy="9.8" rx="2.9" ry="2.3" fill="#f2dcc0"/><path d="M0.8 16.8 Q0.8 12.6 4.5 11.8 L11.5 11.8 L11.5 17 Z" fill="#8ab6ce"/><path d="M0.9 16.4 Q1 12.8 4.2 12" fill="none" stroke="#24384a" stroke-width="1"/><path d="M2.5 15h8" stroke="#a8d0e4" stroke-width="0.9"/><rect x="10.2" y="11.5" width="0.8" height="5.5" fill="#3a5a70"/></g></svg><svg class="a" style="left:50px;top:281px" width="12" height="18" viewBox="0 0 12 18"><defs><clipPath id="cp1"><rect x="0" y="0" width="11" height="18"/></clipPath></defs><g clip-path="url(#cp1)"><path d="M8 1.8 Q9 0.8 10.2 1.2 L11.5 1.5 L11.5 8 L8.2 8 Z" fill="#b09070"/><path d="M2.8 9.2 Q3 5.2 6.8 5 L11.5 5 L11.5 9.5 L2.8 9.5 Z" fill="#9a7448"/><path d="M2.8 9.2 Q3 5.2 6.6 5 L8.3 4.8 L8.3 1.8 L9.6 1" fill="none" stroke="#3a2818" stroke-width="0.9"/><ellipse cx="6.8" cy="9.8" rx="2.9" ry="2.3" fill="#f2dcc0"/><path d="M0.8 16.8 Q0.8 12.6 4.5 11.8 L11.5 11.8 L11.5 17 Z" fill="#8ab6ce"/><path d="M0.9 16.4 Q1 12.8 4.2 12" fill="none" stroke="#24384a" stroke-width="1"/><path d="M2.5 15h8" stroke="#a8d0e4" stroke-width="0.9"/><rect x="10.2" y="11.5" width="0.8" height="5.5" fill="#3a5a70"/></g></svg><svg class="a" style="left:50px;top:299px" width="12" height="18" viewBox="0 0 12 18"><defs><clipPath id="cp1"><rect x="0" y="0" width="11" height="18"/></clipPath></defs><g clip-path="url(#cp1)"><path d="M8 1.8 Q9 0.8 10.2 1.2 L11.5 1.5 L11.5 8 L8.2 8 Z" fill="#b09070"/><path d="M2.8 9.2 Q3 5.2 6.8 5 L11.5 5 L11.5 9.5 L2.8 9.5 Z" fill="#9a7448"/><path d="M2.8 9.2 Q3 5.2 6.6 5 L8.3 4.8 L8.3 1.8 L9.6 1" fill="none" stroke="#3a2818" stroke-width="0.9"/><ellipse cx="6.8" cy="9.8" rx="2.9" ry="2.3" fill="#f2dcc0"/><path d="M0.8 16.8 Q0.8 12.6 4.5 11.8 L11.5 11.8 L11.5 17 Z" fill="#8ab6ce"/><path d="M0.9 16.4 Q1 12.8 4.2 12" fill="none" stroke="#24384a" stroke-width="1"/><path d="M2.5 15h8" stroke="#a8d0e4" stroke-width="0.9"/><rect x="10.2" y="11.5" width="0.8" height="5.5" fill="#3a5a70"/></g></svg><svg class="a" style="left:50px;top:317px" width="12" height="18" viewBox="0 0 12 18"><defs><clipPath id="cp1"><rect x="0" y="0" width="11" height="18"/></clipPath></defs><g clip-path="url(#cp1)"><path d="M8 1.8 Q9 0.8 10.2 1.2 L11.5 1.5 L11.5 8 L8.2 8 Z" fill="#b09070"/><path d="M2.8 9.2 Q3 5.2 6.8 5 L11.5 5 L11.5 9.5 L2.8 9.5 Z" fill="#9a7448"/><path d="M2.8 9.2 Q3 5.2 6.6 5 L8.3 4.8 L8.3 1.8 L9.6 1" fill="none" stroke="#3a2818" stroke-width="0.9"/><ellipse cx="6.8" cy="9.8" rx="2.9" ry="2.3" fill="#f2dcc0"/><path d="M0.8 16.8 Q0.8 12.6 4.5 11.8 L11.5 11.8 L11.5 17 Z" fill="#8ab6ce"/><path d="M0.9 16.4 Q1 12.8 4.2 12" fill="none" stroke="#24384a" stroke-width="1"/><path d="M2.5 15h8" stroke="#a8d0e4" stroke-width="0.9"/><rect x="10.2" y="11.5" width="0.8" height="5.5" fill="#3a5a70"/></g></svg><svg class="a" style="left:65px;top:335px" width="16" height="18" viewBox="0 0 16 18"><path d="M0.8 10.6 L8 2.2 L15.2 10.6 L13.2 10.8 L13.2 16.5 L2.8 16.5 L2.8 10.8 Z" fill="#fbf5ef" stroke="#a89890" stroke-width="0.6"/><path d="M0.8 10.6 L8 2.2 L15.2 10.6 L13 10.8 L11 9.5 Q8 8.2 5 9.5 L3 10.8 Z" fill="#e06a3a" stroke="#a04a28" stroke-width="0.6"/><path d="M4 8.6 L8 4 L12 8.6" fill="none" stroke="#f49a68" stroke-width="1.6"/><ellipse cx="8" cy="10.2" rx="2.6" ry="0.9" fill="#8a6a5a"/><rect x="6.6" y="12.2" width="2.8" height="4.3" fill="#b8806c"/><path d="M3 16.8h10" stroke="#605050" stroke-width="0.9"/></svg><svg class="a" style="left:65px;top:371px" width="16" height="18" viewBox="0 0 16 18"><path d="M0.8 10.6 L8 2.2 L15.2 10.6 L13.2 10.8 L13.2 16.5 L2.8 16.5 L2.8 10.8 Z" fill="#fbf5ef" stroke="#a89890" stroke-width="0.6"/><path d="M0.8 10.6 L8 2.2 L15.2 10.6 L13 10.8 L11 9.5 Q8 8.2 5 9.5 L3 10.8 Z" fill="#e06a3a" stroke="#a04a28" stroke-width="0.6"/><path d="M4 8.6 L8 4 L12 8.6" fill="none" stroke="#f49a68" stroke-width="1.6"/><ellipse cx="8" cy="10.2" rx="2.6" ry="0.9" fill="#8a6a5a"/><rect x="6.6" y="12.2" width="2.8" height="4.3" fill="#b8806c"/><path d="M3 16.8h10" stroke="#605050" stroke-width="0.9"/></svg><svg class="a" style="left:65px;top:388px" width="16" height="18" viewBox="0 0 16 18"><path d="M4.5 5 Q6 2.2 10 2.2 L14.5 2.2 Q15.3 3.8 14.5 5.5 L6.5 5.5 Z" fill="#2a7a30" stroke="#0e4a16" stroke-width="0.6"/><path d="M6.5 4 h6" stroke="#5aa858" stroke-width="0.8"/><path d="M3.6 5 Q2.6 7.5 3.2 14 L4.8 14 Q4.4 8.5 5.4 5.6 Z" fill="#302418"/><rect x="0.5" y="13.5" width="15" height="4" rx="0.8" fill="#d2ac7a" stroke="#6a4a28" stroke-width="0.8"/><path d="M2 15.5h12" stroke="#f2dcb4" stroke-width="1"/></svg><svg class="a" style="left:37px;top:407px" width="8" height="18" viewBox="0 0 8 18"><rect x="2.8" y="2" width="2.4" height="5" fill="#a89a80"/><path d="M2.6 6 Q1 7.5 1 9.5 L1 17 L7 17 L7 9.5 Q7 7.5 5.4 6 Z" fill="#2a2a2a"/><rect x="1" y="12" width="6" height="3" fill="#e4e4e4"/><rect x="2" y="9" width="1.2" height="2" fill="#808080"/></svg><svg class="a" style="left:34px;top:426px" width="15" height="17" viewBox="0 0 15 17"><ellipse cx="9.5" cy="3.6" rx="2.8" ry="2.6" fill="#f0ec9c"/><path d="M3 11 Q3.5 7 8 7 Q10 7 10.5 9 L9 11 Z" fill="#b8a878"/><path d="M8.5 10 Q9 7.5 11.5 7.5 Q14 7.5 14 10 L12.5 9.5 Q11 9 9.5 10.5Z" fill="#302820"/><ellipse cx="11.5" cy="11" rx="2.4" ry="2" fill="#e8d8c0"/><path d="M7.5 16.5 Q8 13 11 13 Q14.5 13 14.5 16.5Z" fill="#9a8888"/><ellipse cx="5.6" cy="10.6" rx="2.3" ry="2" fill="#d8c8a0"/><path d="M0.5 16.5 Q1 12.8 5 12.8 Q8.8 12.8 9 16.5Z" fill="#5888c8"/></svg><svg class="a" style="left:50px;top:443px" width="12" height="18" viewBox="0 0 12 18"><defs><clipPath id="cp2"><rect x="0" y="0" width="11" height="18"/></clipPath></defs><g clip-path="url(#cp2)"><path d="M8.5 7 L9 1.5 L11 1.5 L11 8 Z" fill="#e0dcb0"/><path d="M4.5 12.5 L5 8.5 Q6 7 8.5 7 L11 7 L11 12.5 Z" fill="#b8a878"/><circle cx="10" cy="9.5" r="1.2" fill="#303020"/><path d="M2.5 17.5 L3.5 14 Q4.5 12 7 12 L11 12 L11 18 Z" fill="#7aa0c0"/><path d="M2.5 17 L3.5 14.5" stroke="#3a5068" stroke-width="1"/><rect x="9.6" y="12.5" width="1.4" height="3" fill="#304860"/></g></svg><svg class="a" style="left:50px;top:461px" width="12" height="18" viewBox="0 0 12 18"><defs><clipPath id="cp2"><rect x="0" y="0" width="11" height="18"/></clipPath></defs><g clip-path="url(#cp2)"><path d="M8.5 7 L9 1.5 L11 1.5 L11 8 Z" fill="#e0dcb0"/><path d="M4.5 12.5 L5 8.5 Q6 7 8.5 7 L11 7 L11 12.5 Z" fill="#b8a878"/><circle cx="10" cy="9.5" r="1.2" fill="#303020"/><path d="M2.5 17.5 L3.5 14 Q4.5 12 7 12 L11 12 L11 18 Z" fill="#7aa0c0"/><path d="M2.5 17 L3.5 14.5" stroke="#3a5068" stroke-width="1"/><rect x="9.6" y="12.5" width="1.4" height="3" fill="#304860"/></g></svg><svg class="a" style="left:35px;top:480px" width="14" height="16" viewBox="0 0 14 16"><rect x="1" y="2" width="12" height="8" fill="#228a2a" stroke="#0e480e" stroke-width="0.8"/><path d="M6 5.5 Q7 3.5 8 5.5 Q9 4 10.5 5" fill="none" stroke="#a8e098" stroke-width="0.8"/><path d="M0 9.5 L4 6.5" stroke="#e0f0e0" stroke-width="1.2"/><rect x="0" y="10" width="14" height="1.8" fill="#1e1e14"/><path d="M3 11.5 L1.5 15 M11 11.5 L12.5 15 M5 13.2 h4" stroke="#302818" stroke-width="1.4"/></svg><svg class="a" style="left:33px;top:498px" width="16" height="17" viewBox="0 0 16 17"><path d="M4.5 8 Q4 2 8.5 2 Q13 2 12.6 8 Q12 10.5 8.5 10.5 Q5 10.5 4.5 8Z" fill="#f4b058" stroke="#9a6a28" stroke-width="0.9"/><path d="M4.6 5.5 Q5 2.2 8.5 2.2 Q12 2.2 12.5 5.5 Q11 4 9.5 4.6 Q7 4 4.6 5.5Z" fill="#c8883a"/><path d="M1.3 15.5 L1.3 13.5 Q2 9.5 6 9.5 L11 9.5 Q15 9.5 15.7 13.5 L15.7 15.5 Z" fill="#f2a440" stroke="#9a6a28" stroke-width="0.9"/><path d="M3 14.3h11" stroke="#f8c070" stroke-width="0.8"/></svg><svg class="a" style="left:33px;top:516px" width="16" height="17" viewBox="0 0 16 17"><path d="M4.5 8 Q4 2 8.5 2 Q13 2 12.6 8 Q12 10.5 8.5 10.5 Q5 10.5 4.5 8Z" fill="#f4b058" stroke="#9a6a28" stroke-width="0.9"/><path d="M4.6 5.5 Q5 2.2 8.5 2.2 Q12 2.2 12.5 5.5 Q11 4 9.5 4.6 Q7 4 4.6 5.5Z" fill="#c8883a"/><path d="M1.3 15.5 L1.3 13.5 Q2 9.5 6 9.5 L11 9.5 Q15 9.5 15.7 13.5 L15.7 15.5 Z" fill="#f2a440" stroke="#9a6a28" stroke-width="0.9"/><path d="M3 14.3h11" stroke="#f8c070" stroke-width="0.8"/></svg><div class="a" style="left:11px;top:317px;width:50px;height:18px;border:1px dotted #fff"></div><div class="a" style="left:11px;top:541px;width:781px;height:16px;background-color:#d4d0c8;background-image:repeating-conic-gradient(#fff 0 25%, #d4d0c8 0 50%);background-size:2px 2px"></div><div class="hd" style="left:11px;top:541px;width:16px;height:16px;box-shadow:inset 1px 1px #d4d0c8,inset -1px -1px #404040,inset 2px 2px #fff,inset -2px -2px #808080"></div><svg class="a" style="left:16px;top:545px" width="4" height="7" viewBox="0 0 4 7"><path d="M4 0V7L0 3.5Z" fill="#000"/></svg><div class="hd" style="left:27px;top:541px;width:294px;height:16px;box-shadow:inset 1px 1px #d4d0c8,inset -1px -1px #404040,inset 2px 2px #fff,inset -2px -2px #808080"></div><div class="hd" style="left:776px;top:541px;width:16px;height:16px;box-shadow:inset 1px 1px #d4d0c8,inset -1px -1px #404040,inset 2px 2px #fff,inset -2px -2px #808080"></div><svg class="a" style="left:782px;top:545px" width="4" height="7" viewBox="0 0 4 7"><path d="M0 0V7L4 3.5Z" fill="#000"/></svg><div class="a" style="left:4px;top:566px;width:150px;height:17px;border-top:1px solid #808080;border-left:1px solid #808080;border-right:1px solid #fff;border-bottom:1px solid #fff"></div><div class="a" style="left:156px;top:566px;width:643px;height:17px;border-top:1px solid #808080;border-left:1px solid #808080;border-right:1px solid #fff;border-bottom:1px solid #fff"></div><svg class="a" style="left:785px;top:569px" width="13" height="13" viewBox="0 0 13 13"><path d="M12 1 L1 12 M12 5 L5 12 M12 9 L9 12" stroke="#808080" stroke-width="1.4"/><path d="M12.5 2 L2 12.5 M12.5 6 L6 12.5 M12.5 10 L10 12.5" stroke="#fff" stroke-width="0.8"/></svg><div class="a" style="left:0;top:0;width:803px;height:587px;filter:url(#th)"><div class="t" style="left:9px;top:26px;font-size:11px;transform:none;letter-spacing:0.15px">Datenbank</div><div class="t" style="left:72px;top:26px;font-size:11px;transform:none;letter-spacing:0.15px">Liste</div><div class="t" style="left:106px;top:26px;font-size:11px;transform:none;letter-spacing:0.15px">Kontakt</div><div class="t" style="left:155px;top:26px;font-size:11px;transform:none;letter-spacing:0.15px">Bearbeiten</div><div class="t" style="left:219px;top:26px;font-size:11px;transform:none;letter-spacing:0.15px">Hilfe</div><div class="t" style="left:9px;top:95px">Gruppe:</div><div class="t" style="left:75px;top:96px">Alle</div><div class="t" style="left:222px;top:94px">Benutzer:</div><div class="t" style="left:277px;top:95px">Alle</div><div class="t" style="left:9px;top:124px">Telefon:</div><div class="t" style="left:55px;top:124px">[Alle]</div><div class="t" style="left:142px;top:124px">E-Mail:</div><div class="t" style="left:182px;top:124px">[Alle]</div><div class="t" style="left:271px;top:124px">Internet:</div><div class="t" style="left:317px;top:124px">[Alle]</div><div class="t" style="left:423px;top:91px">Adressen</div><div class="t" style="left:423px;top:109px">Bankverbindungen</div><div class="t" style="left:423px;top:127px">Kontake gruppiert anzeigen</div><div class="t" style="left:539px;top:90px">Nur sichtbare Kontake</div><div class="t" style="left:539px;top:109px">Nur geänderte Kontake</div><div class="t" style="left:19px;top:158px">Anrede</div><div class="t" style="left:67px;top:158px">Nachname</div><div class="t" style="left:168px;top:158px">Vorname</div><div class="t" style="left:247px;top:158px">Straße</div><div class="t" style="left:327px;top:158px">Hausnr.</div><div class="t" style="left:377px;top:158px">Adresszusatz</div><div class="t" style="left:457px;top:158px">PLZ</div><div class="t" style="left:507px;top:158px">Stadt</div><div class="t" style="left:587px;top:158px">Bundesland...</div><div class="t" style="left:667px;top:158px">Staat, Land</div><div class="t" style="left:747px;top:158px">Geog...</div><div class="t" style="left:69px;top:175px;color:#000">Familie</div><div class="t" style="left:69px;top:193px;color:#000">Mustermann</div><div class="t" style="left:169px;top:193px;color:#000">Anna</div><div class="t" style="left:87px;top:211px;color:#000">Privat:</div><div class="t" style="left:249px;top:211px;color:#000">Musterstrasse</div><div class="t" style="left:329px;top:211px;color:#000">1</div><div class="t" style="left:459px;top:211px;color:#000">55555</div><div class="t" style="left:509px;top:211px;color:#000">Musterstadt</div><div class="t" style="left:589px;top:211px;color:#000">Baden-Würt...</div><div class="t" style="left:669px;top:211px;color:#000">Deutschland</div><div class="t" style="left:748px;top:211px;color:#000">B: 50,...</div><div class="t" style="left:69px;top:229px;color:#000">Mustermann</div><div class="t" style="left:169px;top:229px;color:#000">Lisa</div><div class="t" style="left:87px;top:247px;color:#000">Privat:</div><div class="t" style="left:249px;top:247px;color:#000">Musterstrasse</div><div class="t" style="left:329px;top:247px;color:#000">1</div><div class="t" style="left:459px;top:247px;color:#000">55555</div><div class="t" style="left:509px;top:247px;color:#000">Musterstadt</div><div class="t" style="left:589px;top:247px;color:#000">Baden-Würt...</div><div class="t" style="left:669px;top:247px;color:#000">Deutschland</div><div class="t" style="left:748px;top:247px;color:#000">B: 50,...</div><div class="t" style="left:69px;top:265px;color:#000">Mustermann</div><div class="t" style="left:169px;top:265px;color:#000">Stefan</div><div class="t" style="left:69px;top:283px;color:#000">Mustermann</div><div class="t" style="left:169px;top:283px;color:#000">Thomas</div><div class="t" style="left:69px;top:301px;color:#000">Mustermann</div><div class="t" style="left:169px;top:301px;color:#000">Udo</div><div class="t" style="left:69px;top:319px;color:#fff">Mustermann</div><div class="t" style="left:169px;top:319px;color:#fff">Max</div><div class="t" style="left:87px;top:337px;color:#000">Privat:</div><div class="t" style="left:249px;top:337px;color:#000">Musterstrasse</div><div class="t" style="left:329px;top:337px;color:#000">1</div><div class="t" style="left:459px;top:337px;color:#000">55555</div><div class="t" style="left:509px;top:337px;color:#000">Musterstadt</div><div class="t" style="left:589px;top:337px;color:#000">Baden-Würt...</div><div class="t" style="left:669px;top:337px;color:#000">Deutschland</div><div class="t" style="left:748px;top:337px;color:#000">B: 50,...</div><div class="t" style="left:87px;top:355px;color:#000">Firma:</div><div class="t" style="left:748px;top:355px;color:#000">B: 0,0...</div><div class="t" style="left:87px;top:373px;color:#000">Privat:</div><div class="t" style="left:87px;top:391px;color:#000">Firma:</div><div class="t" style="left:69px;top:409px;color:#000">Kneipen, Resta...</div><div class="t" style="left:69px;top:427px;color:#000">Kollegen</div><div class="t" style="left:69px;top:445px;color:#000">Panther</div><div class="t" style="left:169px;top:445px;color:#000">Paul</div><div class="t" style="left:69px;top:463px;color:#000">Testfamilie</div><div class="t" style="left:169px;top:463px;color:#000">Robert</div><div class="t" style="left:69px;top:481px;color:#000">Schule, Kinder</div><div class="t" style="left:69px;top:499px;color:#000">Testfamilie</div><div class="t" style="left:169px;top:499px;color:#000">Elke</div><div class="t" style="left:69px;top:517px;color:#000">Testfamilie</div><div class="t" style="left:169px;top:517px;color:#000">Paul</div><div class="t" style="left:6px;top:569px">14 von 14 Kontakten</div></div></body></html>
